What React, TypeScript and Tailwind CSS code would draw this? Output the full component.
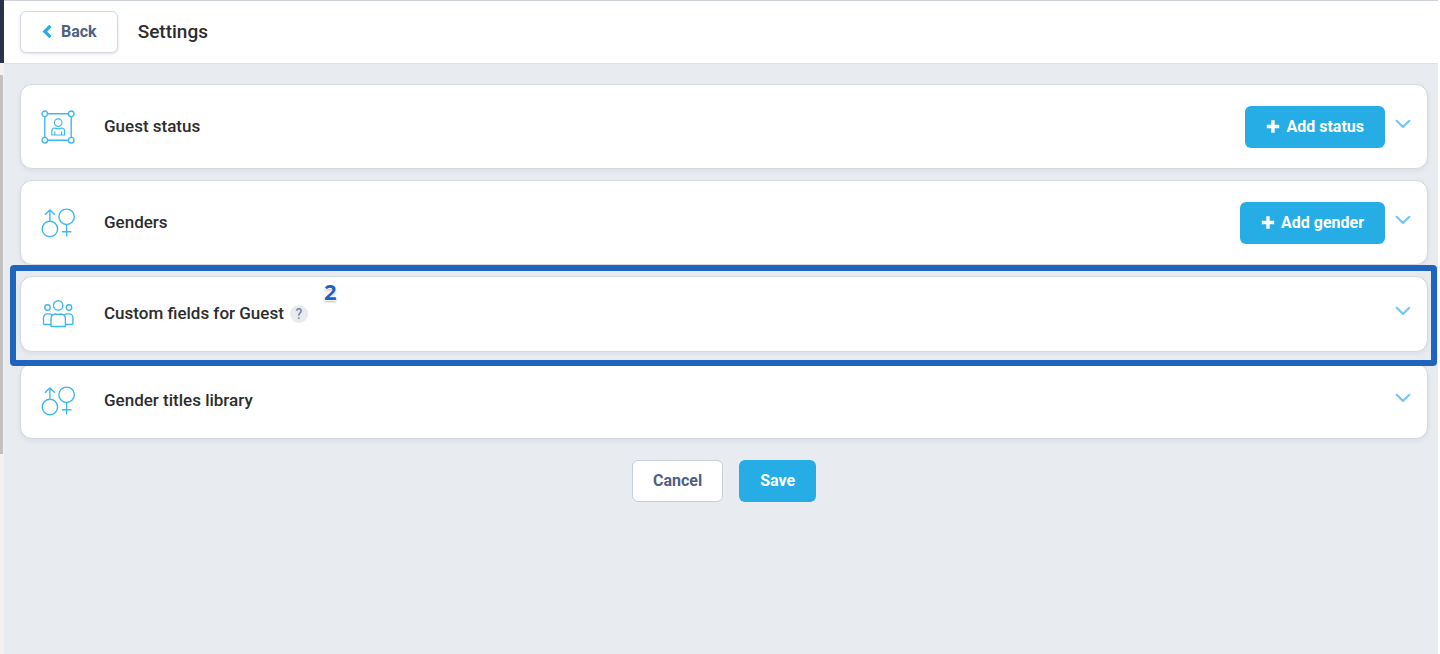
import { useState } from 'react'
import type { ReactNode } from 'react'
import clsx from 'clsx'

const iconProps = {
  width: 34,
  height: 34,
  viewBox: '0 0 34 34',
  fill: 'none',
  stroke: '#3fb8ee',
  strokeWidth: 1.4,
  'aria-hidden': true,
} as const

function StatusIcon() {
  return (
    <svg {...iconProps}>
      <path d="M6.5 3.8h21M6.5 30.2h21M3.8 6.5v21M30.2 6.5v21" />
      <circle cx="3.8" cy="3.8" r="2.8" />
      <circle cx="30.2" cy="3.8" r="2.8" />
      <circle cx="3.8" cy="30.2" r="2.8" />
      <circle cx="30.2" cy="30.2" r="2.8" />
      <g strokeWidth="1.2">
        <circle cx="17.2" cy="12.6" r="3.8" />
        <path d="M10.8 25v-4a3 3 0 0 1 3-3q3.4 1.6 6.8 0a3 3 0 0 1 3 3v4z" />
        <path d="M13.8 25v-3.5M20.6 25v-3.5" />
      </g>
    </svg>
  )
}

function GendersIcon() {
  return (
    <svg {...iconProps}>
      <circle cx="8.9" cy="23" r="7.7" />
      <path d="M8.9 15.3V4M3.9 8.8l5-4.8 5 4.8" />
      <circle cx="25.6" cy="10.8" r="7.7" />
      <path d="M25.6 18.5v11.9M20.9 25.8h9.5" />
    </svg>
  )
}

function GuestsIcon() {
  return (
    <svg {...iconProps}>
      <circle cx="17.2" cy="8.4" r="4.7" />
      <circle cx="6.5" cy="10.5" r="2.7" />
      <circle cx="28" cy="10.5" r="2.7" />
      <path d="M10 29v-7a5 5 0 0 1 4-5q3.2 1 6.4 0a5 5 0 0 1 4 5V29q0 .5-.5.5H10.5Q10 29.500 10 29z" />
      <path d="M10 27.5H3.4a.9.9 0 0 1-.9-.9v-6a3.7 3.7 0 0 1 3.7-3.7h2.2q1.6 0 2.6 1.2M24.4 27.5h6.6a.9.9 0 0 0 .9-.9v-6a3.7 3.7 0 0 0-3.7-3.7H26q-1.6 0-2.6 1.2" />
    </svg>
  )
}

function PlusIcon() {
  return (
    <svg width="14" height="14" viewBox="0 0 14 14" aria-hidden>
      <path d="M7 .3v12.4M.8 6.5h12.400" stroke="currentColor" strokeWidth="3.4" />
    </svg>
  )
}

interface SectionProps {
  title: string
  icon: ReactNode
  action?: string
  help?: boolean
  children?: ReactNode
}

function Section({ title, icon, action, help, children }: SectionProps) {
  const [open, setOpen] = useState(false)

  return (
    <section
      className={clsx(
        'relative flex items-center rounded-xl border border-[#d3d8e0] bg-white pl-5 pr-4 shadow-[0_2px_4px_rgba(60,70,90,0.08)]',
        action ? 'min-h-[85px]' : 'min-h-[76px]',
      )}
    >
      {icon}
      <h2 className="ml-[29px] pb-0.5 text-[17px] leading-6 font-medium text-[#2d2d2d]">{title}</h2>
      {help && (
        <button
          type="button"
          aria-label="Help"
          className="ml-1.5 flex size-[18px] items-center justify-center rounded-full bg-[#e8ebf0] text-sm font-medium text-[#7b879c]"
        >
          ?
        </button>
      )}
      <div className="ml-auto flex items-center gap-2.5">
        {action && (
          <button
            type="button"
            className="flex h-[42px] items-center gap-1.5 rounded-md bg-[#27ade5] px-[21px] text-base font-bold text-white"
          >
            <PlusIcon />
            {action}
          </button>
        )}
        <button
          type="button"
          aria-label={`Expand ${title}`}
          aria-expanded={open}
          onClick={() => setOpen(!open)}
        >
          <svg width="16" height="20" viewBox="0 0 16 20" fill="none" aria-hidden>
            <path
              d="M1.7 3.8 8 9.9l6.3-6.1"
              stroke="#77c6f4"
              strokeWidth="2.2"
              strokeLinecap="round"
              strokeLinejoin="round"
            />
          </svg>
        </button>
      </div>
      {children}
    </section>
  )
}

export default function App() {
  return (
    <div className="flex min-h-screen bg-white pr-0.5 font-[Roboto,sans-serif]">
      {/* Sidebar edge with its scrollbar */}
      <div className="flex w-1 shrink-0 flex-col bg-[#f3f2f1]">
        <div className="h-[63px] bg-[#283347]" />
        <div className="mt-3 mr-px h-[58vh] bg-[#c3c1c0]" />
      </div>

      <div className="flex min-w-0 flex-1 flex-col bg-[#e8ebf0]">
        <header className="flex h-16 items-center border-t border-b border-t-[#cdd2dd] border-b-[#dce1e6] bg-white pl-4">
          <button
            type="button"
            className="flex h-[42px] items-center gap-2 rounded-md border border-[#d3d8e2] bg-white px-5 text-base font-bold text-[#50607f] shadow-[0_1px_3px_rgba(60,70,90,0.16)]"
          >
            <svg width="12" height="16" viewBox="0 0 12 16" fill="none" aria-hidden>
              <path d="M9.5 1.8 3.8 7.5l5.7 5.7" stroke="#27ade5" strokeWidth="3.2" />
            </svg>
            Back
          </button>
          <h1 className="ml-5 text-[19px] leading-6 font-medium text-[#2d2d2d]">Settings</h1>
        </header>

        <main className="flex flex-col gap-[11px] pt-5 pr-2.5 pb-5 pl-4">
          <Section title="Guest status" icon={<StatusIcon />} action="Add status" />
          <Section title="Genders" icon={<GendersIcon />} action="Add gender" />
          <Section title="Custom fields for Guest" icon={<GuestsIcon />} help>
            <div className="pointer-events-none absolute -top-3 -right-2.5 -bottom-[15px] -left-[11px] z-10 rounded-sm border-6 border-[#1f64bf]" />
            <span className="absolute top-0.5 left-[303px] font-[Noto_Sans,sans-serif] text-[22px] leading-6 font-bold text-[#1f64bf] [text-shadow:0_0_2px_#fff,0_1px_1px_#fff,0_2px_2px_rgba(90,90,90,0.45)]">
              2
            </span>
          </Section>
          <Section title="Gender titles library" icon={<GendersIcon />} />

          <div className="mt-2.5 flex justify-center gap-4">
            <button
              type="button"
              className="h-[42px] rounded-md border border-[#c6cedc] bg-white px-5 text-base font-bold text-[#50607f]"
            >
              Cancel
            </button>
            <button
              type="button"
              className="h-[42px] rounded-md bg-[#27ade5] px-[21px] text-base font-bold text-white"
            >
              Save
            </button>
          </div>
        </main>
      </div>
    </div>
  )
}
